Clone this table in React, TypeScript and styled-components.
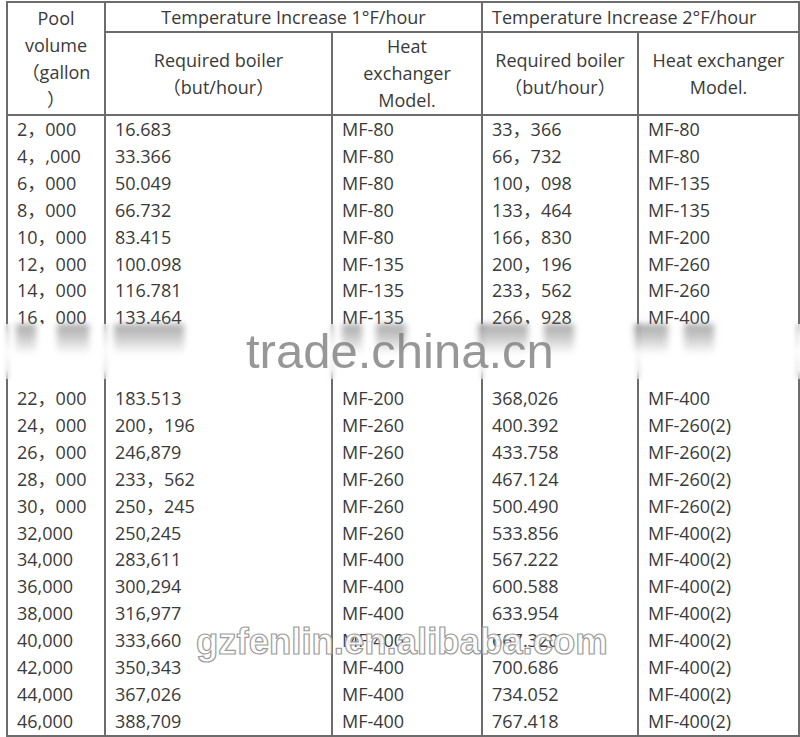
import React from "react";
import styled, { createGlobalStyle } from "styled-components";

const Global = createGlobalStyle`
  html, body { margin: 0; padding: 0; background: #ffffff; }
  body { width: 800px; height: 737px; overflow: hidden; }
`;

const Page = styled.div`
  position: relative;
  width: 800px;
  height: 737px;
  padding: 1px 0 0 6px;
  box-sizing: border-box;
  font-family: "Open Sans", "Noto Sans CJK SC", sans-serif;
  color: #3a3a3a;
`;

const Table = styled.table`
  border-collapse: collapse;
  width: 792px;
  table-layout: fixed;
  border: 2px solid #6c6c6c;
`;

const HeadCell = styled.th<{ $h?: number; $align?: "left" | "center" }>`
  border: 2px solid #6c6c6c;
  font-weight: 400;
  font-size: 18px;
  line-height: 27px;
  text-align: ${(p) => p.$align ?? "center"};
  vertical-align: middle;
  padding: 0 ${(p) => (p.$align === "left" ? "0 0 9px" : "4px")};
  height: ${(p) => (p.$h ? `${p.$h}px` : "auto")};
  box-sizing: border-box;
  white-space: nowrap;
`;

const Row = styled.tr`
  height: 26.9px;
`;

const Cell = styled.td`
  border-left: 2px solid #6c6c6c;
  border-right: 2px solid #6c6c6c;
  font-size: 18px;
  line-height: 26.9px;
  padding: 0 0 0 9px;
  white-space: nowrap;
  overflow: hidden;
  height: 26.9px;
  box-sizing: border-box;
`;

const Band = styled.div`
  position: absolute;
  left: 0;
  top: 324px;
  width: 800px;
  height: 55px;
  background: linear-gradient(
    to bottom,
    rgba(255, 255, 255, 0.85) 0px,
    #ffffff 10px,
    #ffffff 46px,
    rgba(255, 255, 255, 0.6) 55px
  );
`;

const Smear = styled.div<{ $x: number; $w: number }>`
  position: absolute;
  left: ${(p) => p.$x}px;
  width: ${(p) => p.$w}px;
  top: 0;
  height: 30px;
  background: linear-gradient(
    to bottom,
    rgba(130, 130, 130, 0.7) 0%,
    rgba(160, 160, 160, 0.45) 55%,
    rgba(210, 210, 210, 0) 100%
  );
  filter: blur(3px);
`;

const LineGhost = styled.div<{ $x: number }>`
  position: absolute;
  left: ${(p) => p.$x - 1}px;
  width: 3px;
  top: 0;
  height: 55px;
  background: linear-gradient(
    to bottom,
    rgba(150, 150, 150, 0.6) 0%,
    rgba(225, 225, 225, 0.15) 50%,
    rgba(170, 170, 170, 0.5) 100%
  );
  filter: blur(2px);
`;

const TradeMark = styled.div`
  position: absolute;
  left: 246px;
  top: 321px;
  font-family: "Liberation Sans", Arial, sans-serif;
  font-size: 49px;
  line-height: 60px;
  color: rgba(125, 125, 125, 0.8);
  white-space: nowrap;
`;

const OutlineMark = styled.div`
  position: absolute;
  left: 196px;
  top: 620px;
  font-family: "Liberation Sans", Arial, sans-serif;
  font-weight: 700;
  font-size: 36.5px;
  line-height: 44px;
  color: rgba(255, 255, 255, 0.88);
  -webkit-text-stroke: 1.2px #9c9c9c;
  white-space: nowrap;
`;

type R = [string, string, string, string, string];

const rows: R[] = [
  ["2，000", "16.683", "MF-80", "33，366", "MF-80"],
  ["4，,000", "33.366", "MF-80", "66，732", "MF-80"],
  ["6，000", "50.049", "MF-80", "100，098", "MF-135"],
  ["8，000", "66.732", "MF-80", "133，464", "MF-135"],
  ["10，000", "83.415", "MF-80", "166，830", "MF-200"],
  ["12，000", "100.098", "MF-135", "200，196", "MF-260"],
  ["14，000", "116.781", "MF-135", "233，562", "MF-260"],
  ["16，000", "133.464", "MF-135", "266，928", "MF-400"],
  ["", "", "", "", ""],
  ["", "", "", "", ""],
  ["22，000", "183.513", "MF-200", "368,026", "MF-400"],
  ["24，000", "200，196", "MF-260", "400.392", "MF-260(2)"],
  ["26，000", "246,879", "MF-260", "433.758", "MF-260(2)"],
  ["28，000", "233，562", "MF-260", "467.124", "MF-260(2)"],
  ["30，000", "250，245", "MF-260", "500.490", "MF-260(2)"],
  ["32,000", "250,245", "MF-260", "533.856", "MF-400(2)"],
  ["34,000", "283,611", "MF-400", "567.222", "MF-400(2)"],
  ["36,000", "300,294", "MF-400", "600.588", "MF-400(2)"],
  ["38,000", "316,977", "MF-400", "633.954", "MF-400(2)"],
  ["40,000", "333,660", "MF-400", "667.320", "MF-400(2)"],
  ["42,000", "350,343", "MF-400", "700.686", "MF-400(2)"],
  ["44,000", "367,026", "MF-400", "734.052", "MF-400(2)"],
  ["46,000", "388,709", "MF-400", "767.418", "MF-400(2)"],
];

const smears: [number, number][] = [
  [16, 20],
  [57, 32],
  [114, 70],
  [342, 20],
  [376, 30],
  [478, 50],
  [544, 30],
  [634, 34],
  [684, 30],
];

const ghostLines = [7, 105, 332, 482, 638, 797];

export default function App() {
  return (
    <>
      <Global />
      <Page>
        <Table>
          <colgroup>
            <col style={{ width: 98 }} />
            <col style={{ width: 227 }} />
            <col style={{ width: 150 }} />
            <col style={{ width: 156 }} />
            <col style={{ width: 161 }} />
          </colgroup>
          <thead>
            <tr>
              <HeadCell rowSpan={2}>
                Pool
                <br />
                volume
                <br />
                （gallon
                <br />）
              </HeadCell>
              <HeadCell colSpan={2} $h={30}>
                Temperature Increase 1°F/hour
              </HeadCell>
              <HeadCell colSpan={2} $h={30} $align="left">
                Temperature Increase 2°F/hour
              </HeadCell>
            </tr>
            <tr>
              <HeadCell $h={80}>
                Required boiler
                <br />
                （but/hour）
              </HeadCell>
              <HeadCell $h={80}>
                Heat
                <br />
                exchanger
                <br />
                Model.
              </HeadCell>
              <HeadCell $h={80}>
                Required boiler
                <br />
                （but/hour）
              </HeadCell>
              <HeadCell $h={80}>
                Heat exchanger
                <br />
                Model.
              </HeadCell>
            </tr>
          </thead>
          <tbody>
            {rows.map((r, ri) => (
              <Row key={ri}>
                {r.map((c, i) => (
                  <Cell key={i}>{c}</Cell>
                ))}
              </Row>
            ))}
          </tbody>
        </Table>
        <Band>
          {ghostLines.map((x) => (
            <LineGhost key={x} $x={x} />
          ))}
          {smears.map(([x, w]) => (
            <Smear key={x} $x={x} $w={w} />
          ))}
        </Band>
        <TradeMark>trade.china.cn</TradeMark>
        <OutlineMark>gzfenlin.en.alibaba.com</OutlineMark>
      </Page>
    </>
  );
}
